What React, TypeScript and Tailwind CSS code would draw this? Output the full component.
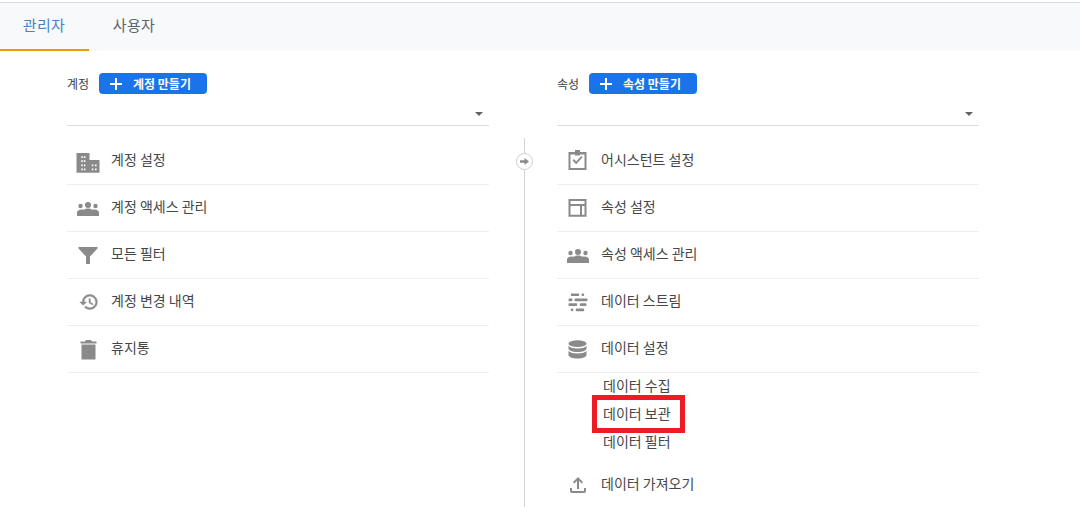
import type { ReactNode } from "react";

const font = { fontFamily: '"Noto Sans CJK KR", "Noto Sans", sans-serif' };

function Icon({ children, className = "h-6 w-6" }: { children: ReactNode; className?: string }) {
  return (
    <svg viewBox="0 0 24 24" className={`${className} fill-[#8a8a8a]`}>
      {children}
    </svg>
  );
}

// window cut-outs of the building icon
const domainWindows = [
  [5.2, 7.3], [7.8, 7.3], [5.2, 11.3], [7.8, 11.3], [5.2, 15.6], [7.8, 15.6], [5.2, 19.6], [7.8, 19.6],
  [15.8, 15.6], [19, 15.6], [15.8, 19.6], [19, 19.6],
]
  .map(([x, y]) => `M${x} ${y}h1.600v1.700h-1.600z`)
  .join("");

const DomainIcon = () => (
  <Icon>
    <path fillRule="evenodd" d={`M.500 4H13.500v7H23.500v12.700H.500z${domainWindows}`} />
  </Icon>
);

const GroupsIcon = () => (
  <Icon>
    <circle cx="4.500" cy="10" r="2.200" />
    <circle cx="12" cy="9" r="3" />
    <circle cx="19.500" cy="10" r="2.200" />
    <path d="M1 20v-3.500c0-1.500 1.500-3 5-3 1 0 1.500.100 2 .300C9 13 10.500 12.500 12 12.500s3 .500 4 1.300c.500-.200 1-.300 2-.300 3.500 0 5 1.500 5 3V20z" />
  </Icon>
);

const FilterIcon = () => (
  <Icon>
    <path d="M2.500 4h19v1.500L14 13.500V21h-4v-7.500L2.500 5.500z" />
  </Icon>
);

const HistoryIcon = () => (
  <Icon className="ml-[3px] h-5 w-5">
    <path
      stroke="#8a8a8a"
      strokeWidth="0.6"
      d="M13 3c-4.970 0-9 4.030-9 9H1l3.890 3.890.070.140L9 12H6c0-3.870 3.130-7 7-7s7 3.130 7 7-3.130 7-7 7c-1.930 0-3.680-.790-4.940-2.060l-1.420 1.420C8.270 19.990 10.510 21 13 21c4.970 0 9-4.030 9-9s-4.030-9-9-9zm-1 5v5l4.280 2.540.720-1.210-3.500-2.080V8H12z"
    />
  </Icon>
);

const TrashIcon = () => (
  <Icon>
    <path d="M5.500 7.500h14v15h-14zM4.500 6.500V4.500H9l1-1.500h5l1 1.500h4.500v2z" />
  </Icon>
);

const AssistantIcon = () => (
  <Icon>
    <path fillRule="evenodd" d="M2.500 3H9V1h5v2h6.500v18H2.500zM4.500 5.500V19h14V5.500h-4.500V6.500H9V5.500z" />
    <path d="M6.500 11.500l1.400-1.400 2.300 2.300 5-5.400 1.400 1.300-6.400 6.900z" />
  </Icon>
);

const LayoutIcon = () => (
  <Icon>
    <path fillRule="evenodd" d="M2.500 3h18v17.700h-18zM4.500 5v3h14V5zM4.500 10v8.700H14V10zM16 10v8.700h2.500V10z" />
  </Icon>
);

const StreamIcon = () => (
  <Icon>
    <rect x="4.800" y="3.500" width="8.400" height="2.600" rx="1" />
    <rect x="15.500" y="3.500" width="2.700" height="2.600" rx="1" />
    <rect x="2.500" y="8.500" width="4" height="2.700" rx="1" />
    <rect x="8.500" y="8.500" width="13" height="2.700" rx="1" />
    <rect x="2.500" y="13.300" width="8.700" height="2.800" rx="1" />
    <rect x="13.800" y="13.300" width="6.700" height="2.800" rx="1" />
    <rect x="4.800" y="18.500" width="2.400" height="2.700" rx="1" />
    <rect x="9.800" y="18.500" width="8.400" height="2.700" rx="1" />
  </Icon>
);

const DatabaseIcon = () => (
  <Icon>
    <ellipse cx="11.500" cy="6.700" rx="9" ry="3.400" />
    <path d="M2.500 9v2.500c0 1.900 4 3.500 9 3.500s9-1.600 9-3.500V9c-1.600 1.700-5.100 2.500-9 2.500S4.100 10.700 2.500 9z" />
    <path d="M2.500 14v4c0 1.900 4 3.500 9 3.500s9-1.600 9-3.500v-4c-1.600 1.700-5.100 2.500-9 2.500S4.100 15.700 2.500 14z" />
  </Icon>
);

const UploadIcon = () => (
  <Icon>
    <path d="M18 15v3H6v-3H4v3c0 1.100.900 2 2 2h12c1.100 0 2-.900 2-2v-3h-2zM7 9l1.410 1.410L11 7.830V16h2V7.830l2.590 2.580L17 9l-5-5-5 5z" />
  </Icon>
);

function Row({ icon, label, border = true }: { icon: ReactNode; label: string; border?: boolean }) {
  return (
    <div className={`flex h-[47px] items-center ${border ? "border-b border-[#eeeeee]" : ""}`}>
      <div className="flex w-[41px] justify-center">{icon}</div>
      <span className="mb-[3px] ml-[3px] text-[14px] text-[#44474a]">{label}</span>
    </div>
  );
}

function Header({ label, button }: { label: string; button: string }) {
  return (
    <div>
      <div className="flex h-[21px] items-center">
        <span className="w-[32px] text-[12px] text-[#3c4043]">{label}</span>
        <button className="flex h-[21px] w-[108px] items-center rounded-[4px] bg-[#1a73e8] pl-[11px] text-[12px] font-bold text-white">
          <svg viewBox="0 0 12 12" className="h-[12px] w-[12px] fill-white">
            <path d="M5 0h2v5h5v2H7v5H5V7H0V5h5z" />
          </svg>
          <span className="ml-[11px]">{button}</span>
        </button>
      </div>
      <div className="flex h-[32px] items-center justify-end border-b border-[#dadce0] pr-[6px] pt-[9px]">
        <div className="h-0 w-0 border-x-[4.5px] border-t-[4.5px] border-x-transparent border-t-[#5f6368]" />
      </div>
    </div>
  );
}

export default function App() {
  return (
    <div className="h-[507px] w-[1080px] overflow-hidden bg-white" style={font}>
      {/* Tabs */}
      <div className="mt-[2px] flex h-[49px] border-t border-[#dadce0] bg-[#f8f9fa]">
        <div className="flex w-[89px] items-center justify-center border-b-2 border-[#f29900] pb-[2px] pr-[1px] text-[15px] tracking-[0.3px] text-[#4285c9]">
          관리자
        </div>
        <div className="flex w-[90px] items-center justify-center pb-[4px] text-[15px] tracking-[0.3px] text-[#5f6368]">
          사용자
        </div>
      </div>

      <div className="flex pl-[67px] pt-[22px]">
        {/* Account column */}
        <div className="w-[422px]">
          <Header label="계정" button="계정 만들기" />
          <div className="mt-[12px]">
            <Row icon={<DomainIcon />} label="계정 설정" />
            <Row icon={<GroupsIcon />} label="계정 액세스 관리" />
            <Row icon={<FilterIcon />} label="모든 필터" />
            <Row icon={<HistoryIcon />} label="계정 변경 내역" />
            <Row icon={<TrashIcon />} label="휴지통" />
          </div>
        </div>

        {/* Divider */}
        <div className="flex w-[68px] justify-center pl-[2px] pt-[65px]">
          <div className="relative h-[400px] w-[1px] bg-[#d4d4d4]">
            <div className="absolute left-[-8px] top-[15px] flex h-[17px] w-[17px] items-center justify-center rounded-full border border-[#d0d0d0] bg-white">
              <svg viewBox="0 0 10 10" className="h-[9px] w-[9px] fill-[#8a8a8a]">
                <path d="M0 3.500h5V1l5 4-5 4V6.500H0z" />
              </svg>
            </div>
          </div>
        </div>

        {/* Property column */}
        <div className="w-[422px]">
          <Header label="속성" button="속성 만들기" />
          <div className="mt-[12px]">
            <Row icon={<AssistantIcon />} label="어시스턴트 설정" />
            <Row icon={<LayoutIcon />} label="속성 설정" />
            <Row icon={<GroupsIcon />} label="속성 액세스 관리" />
            <Row icon={<StreamIcon />} label="데이터 스트림" />
            <Row icon={<DatabaseIcon />} label="데이터 설정" />
            <div className="h-[88px] pl-[46px] text-[14px] leading-[24px] text-[#44474a]">
              <div className="h-[28px]">데이터 수집</div>
              <div className="relative h-[28px]">
                데이터 보관
                <div className="absolute left-[-11px] top-[-6px] h-[38px] w-[93px] border-[5px] border-[#ed1c24]" />
              </div>
              <div className="h-[28px]">데이터 필터</div>
            </div>
            <Row icon={<UploadIcon />} label="데이터 가져오기" border={false} />
          </div>
        </div>
      </div>
    </div>
  );
}
